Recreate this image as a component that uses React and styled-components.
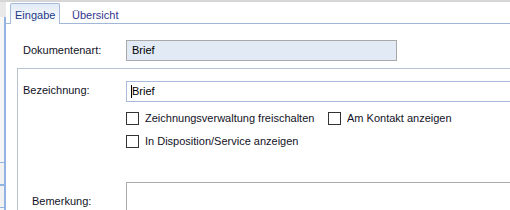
import React from "react";
import styled, { createGlobalStyle } from "styled-components";

const GlobalStyle = createGlobalStyle`
  html, body { margin: 0; padding: 0; background: #ffffff; }
  body {
    font-family: "Liberation Sans", Arial, sans-serif;
    font-size: 11px;
    line-height: 13px;
  }
  * { box-sizing: border-box; }
`;

const Frame = styled.div`
  width: 510px;
  height: 210px;
  overflow: hidden;
  display: flex;
  flex-direction: column;
  background: #ffffff;
`;

const TopEdge = styled.div`
  height: 2px;
  flex-shrink: 0;
  background: #d6d6d6;
`;

const Body = styled.div`
  flex: 1;
  min-height: 0;
  display: flex;
`;

const Side = styled.div`
  width: 6px;
  flex-shrink: 0;
  display: flex;
  flex-direction: column;
`;

const SideCap = styled.div`
  height: 15px;
  background: #e9e9e9;
`;

const SideRail = styled.div`
  flex: 1;
  background: #f6f6f6;
  border-right: 2px solid #93b3e3;
  padding-top: 145px;
  display: flex;
  flex-direction: column;
`;

const SideItem = styled.div`
  height: 23px;
  border-top: 1px solid #93b3e3;
  border-bottom: 1px solid #93b3e3;
  background: #f2f2f2;
`;

const Main = styled.div`
  flex: 1;
  min-width: 0;
  display: flex;
  flex-direction: column;
`;

const TabStrip = styled.div`
  height: 22px;
  flex-shrink: 0;
  display: flex;
  align-items: flex-end;
  padding-left: 4px;
  border-bottom: 1px solid #9fb8d8;
`;

const Tab = styled.div`
  height: 21px;
  white-space: nowrap;
  ${(p) =>
    p.$active
      ? `
    width: 50px;
    margin-bottom: -1px;
    padding: 5px 0 0 4px;
    border: 1px solid #a7bcd8;
    border-bottom: none;
    border-radius: 2px 2px 0 0;
    background: linear-gradient(to bottom, #e2ebf8 0%, #f1f6fc 55%, #ffffff 100%);
    color: #1f3a86;
  `
      : `
    padding: 7px 0 0 12px;
    color: #33358f;
  `}
`;

const Page = styled.div`
  flex: 1;
  min-height: 0;
  display: flex;
  flex-direction: column;
  padding: 16px 0 0 17px;
`;

const FieldRow = styled.div`
  display: flex;
  align-items: ${(p) => (p.$top ? "flex-start" : "center")};
  margin-top: ${(p) => p.$mt || 0}px;
`;

const Label = styled.div`
  width: ${(p) => p.$w}px;
  flex-shrink: 0;
  padding-top: ${(p) => p.$pt || 0}px;
  padding-left: ${(p) => p.$pl || 0}px;
  color: #121226;
  white-space: nowrap;
`;

const ReadonlyBox = styled.div`
  width: 271px;
  height: 21px;
  border: 1px solid #a9a9a9;
  background: #e2eaf6;
  padding-left: 5px;
  display: flex;
  align-items: center;
  color: #000000;
`;

const Group = styled.div`
  flex: 1;
  display: flex;
  flex-direction: column;
  margin: 7px -20px 0 -6px;
  padding: 12px 0 0 5px;
  border-top: 1px solid #b4c5d8;
  border-left: 1px solid #b7c2ce;
`;

const TextBox = styled.div`
  flex: 1;
  height: 21px;
  border: 1px solid #a7bcdb;
  padding-left: 4px;
  display: flex;
  align-items: center;
  color: #000000;
`;

const Caret = styled.span`
  display: inline-block;
  width: 1px;
  height: 13px;
  background: #000000;
`;

const CheckArea = styled.div`
  margin: 10px 0 0 103px;
  display: flex;
  flex-direction: column;
  gap: 10px;
`;

const CheckRow = styled.div`
  display: flex;
`;

const CheckItem = styled.label`
  display: flex;
  align-items: center;
  gap: 6px;
  width: ${(p) => (p.$w ? `${p.$w}px` : "auto")};
  color: #121226;
  white-space: nowrap;
`;

const Box = styled.span`
  width: 13px;
  height: 13px;
  flex-shrink: 0;
  border: 1px solid #333333;
  background: #ffffff;
`;

const MemoBox = styled.div`
  flex: 1;
  height: 80px;
  border: 1px solid #ababab;
  background: #ffffff;
`;

const Check = ({ children, w }) => (
  <CheckItem $w={w}>
    <Box />
    <span>{children}</span>
  </CheckItem>
);

export default function App() {
  return (
    <>
      <GlobalStyle />
      <Frame>
        <TopEdge />
        <Body>
          <Side>
            <SideCap />
            <SideRail>
              <SideItem />
              <SideItem />
            </SideRail>
          </Side>
          <Main>
            <TabStrip>
              <Tab $active>Eingabe</Tab>
              <Tab>Übersicht</Tab>
            </TabStrip>
            <Page>
              <FieldRow>
                <Label $w={103}>Dokumentenart:</Label>
                <ReadonlyBox>Brief</ReadonlyBox>
              </FieldRow>
              <Group>
                <FieldRow $top>
                  <Label $w={103} $pt={3}>Bezeichnung:</Label>
                  <TextBox>
                    <Caret />
                    <span>Brief</span>
                  </TextBox>
                </FieldRow>
                <CheckArea>
                  <CheckRow>
                    <Check w={202}>Zeichnungsverwaltung freischalten</Check>
                    <Check>Am Kontakt anzeigen</Check>
                  </CheckRow>
                  <CheckRow>
                    <Check>In Disposition/Service anzeigen</Check>
                  </CheckRow>
                </CheckArea>
                <FieldRow $top $mt={34}>
                  <Label $w={103} $pl={9} $pt={13}>Bemerkung:</Label>
                  <MemoBox />
                </FieldRow>
              </Group>
            </Page>
          </Main>
        </Body>
      </Frame>
    </>
  );
}
